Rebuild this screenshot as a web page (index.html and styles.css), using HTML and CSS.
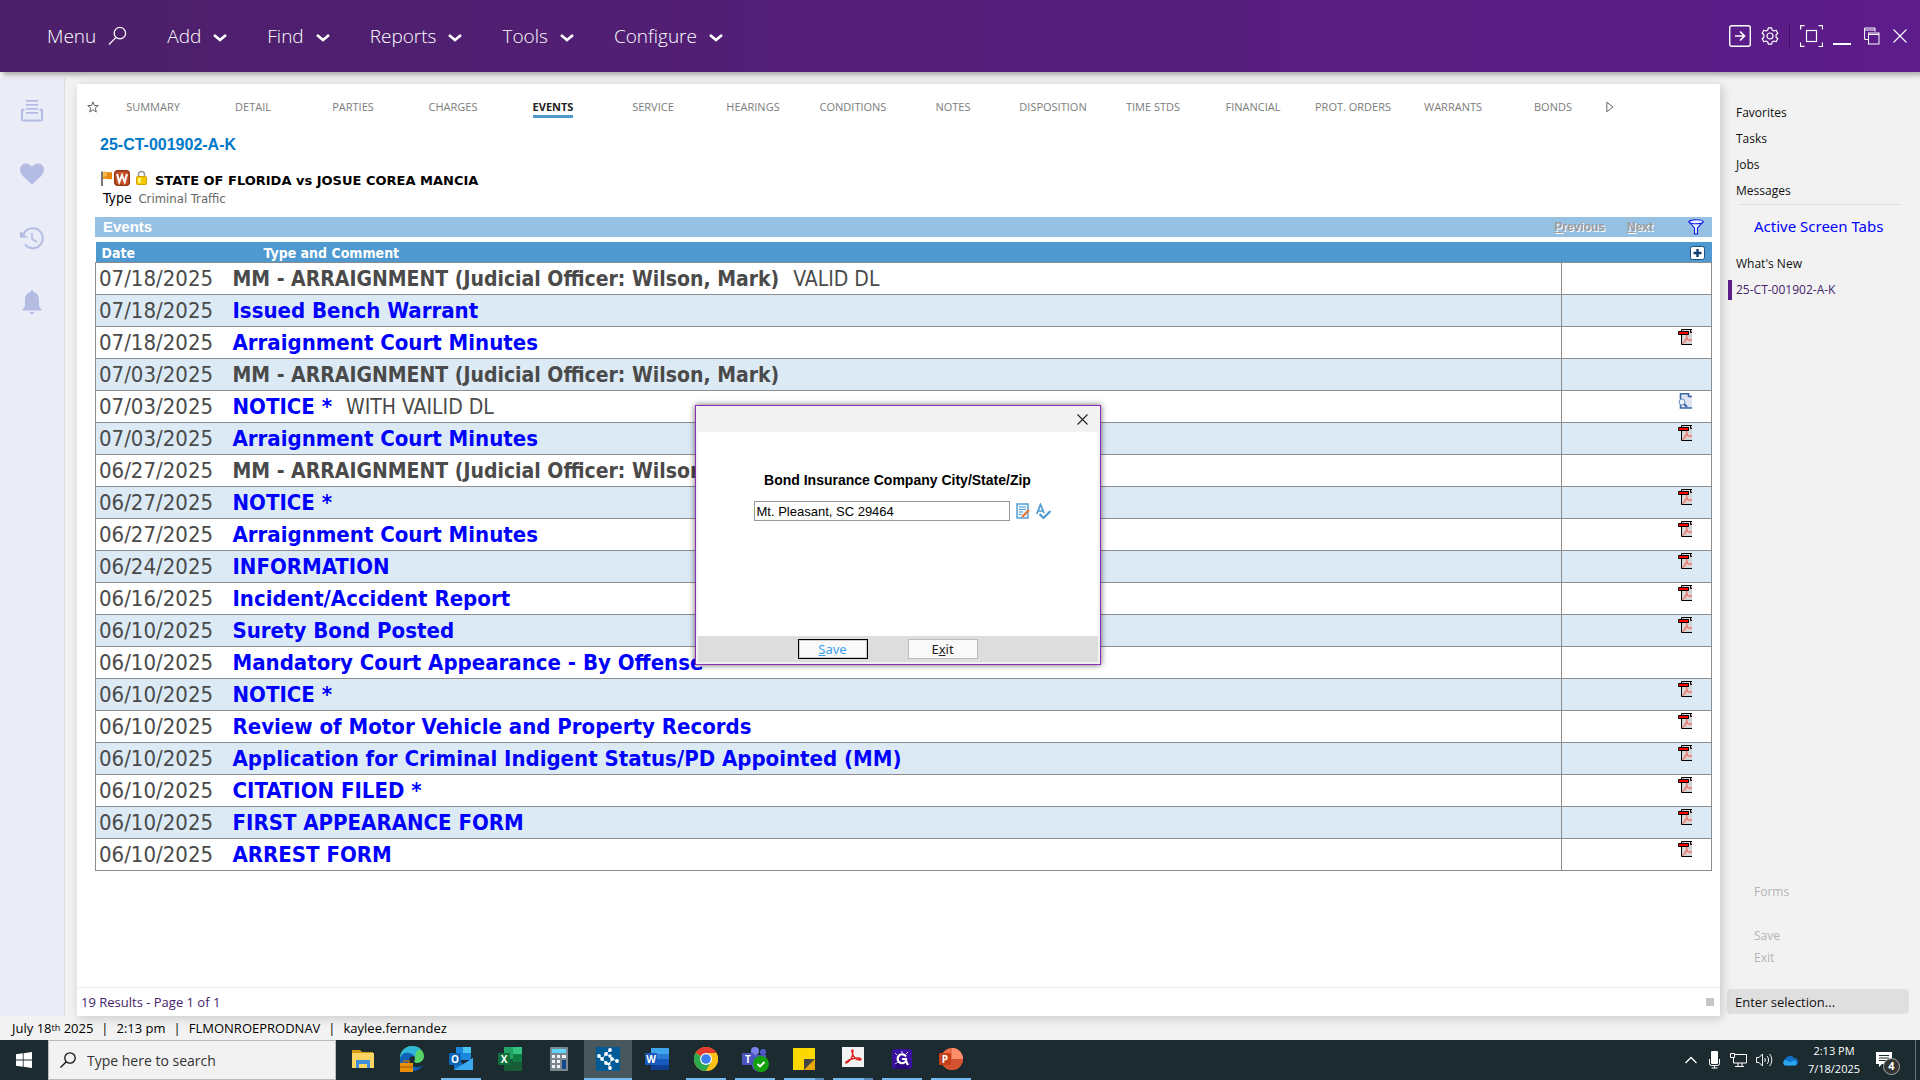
FILE: index.html
```html
<!DOCTYPE html>
<html lang="en">
<head>
<meta charset="utf-8">
<title>25-CT-001902-A-K - Events</title>
<link rel="stylesheet" href="styles.css">
</head>
<body>
<svg class="defs" aria-hidden="true">
  <symbol id="chev" viewBox="0 0 14 10"><path d="M1 2l6 5 6-5" fill="none" stroke="#fff" stroke-width="2.6"/></symbol>
  <symbol id="pdf" viewBox="0 0 14 16"><path d="M3.5.5H14V15.500H3.500z" fill="#d4d4d4"/><path d="M14 .5H3.500V15.500H14" fill="none" stroke="#000"/><path d="M4.500 14.500c3-2 4.500-5 4.500-9M8.500 9c1 2 2.500 2.500 5.500 2" fill="none" stroke="#f76a5e" stroke-width="1.300"/><path d="M12.500.5v3H14" fill="#e00" stroke="#000"/><path d="M.5 2.500h10v3H.5z" fill="#f00" stroke="#000"/></symbol>
  <symbol id="docview" viewBox="0 0 14 16"><path d="M2.500.8h8.500l3 3V15H2.500z" fill="#dfe5f3"/><path d="M2.500 6V.8H10.500V3.500H14M2.500 12v3H14" fill="none" stroke="#3a66a4" stroke-width="1.600"/><circle cx="4" cy="9" r="3" fill="#e6f1f8" stroke="#6d93bd"/><path d="M6 11l3 3" stroke="#3a66a4" stroke-width="2"/></symbol>
</svg>

<header class="topbar">
  <nav class="menu">
    <button class="menu-item">Menu
      <svg width="19" height="20" viewBox="0 0 20 20" fill="none" stroke="#fff" stroke-width="1.300"><circle cx="12.500" cy="7" r="6"/><path d="M8.500 11.500L1 19"/></svg></button>
    <button class="menu-item">Add <svg class="chev" width="14" height="10"><use href="#chev"/></svg></button>
    <button class="menu-item">Find <svg class="chev" width="14" height="10"><use href="#chev"/></svg></button>
    <button class="menu-item">Reports <svg class="chev" width="14" height="10"><use href="#chev"/></svg></button>
    <button class="menu-item">Tools <svg class="chev" width="14" height="10"><use href="#chev"/></svg></button>
    <button class="menu-item">Configure <svg class="chev" width="14" height="10"><use href="#chev"/></svg></button>
  </nav>
  <div class="window-tools">
    <button class="tool" aria-label="Sign out"><svg width="22" height="22" viewBox="0 0 22 22" fill="none" stroke="#fff" stroke-width="1.400"><rect x=".7" y=".7" width="20.600" height="20.600" rx="2"/><path d="M6 11h9M11 6.500l4.500 4.500-4.500 4.500" stroke-width="1.700"/></svg></button>
    <button class="tool" aria-label="Settings"><svg width="18" height="18" viewBox="0 0 18 18" fill="none" stroke="#fff" stroke-width="1.200"><circle cx="9" cy="9" r="3"/><path d="M7.300.8h3.400l.5 2.300 1.600.9 2.300-.8 1.700 3-1.700 1.600v2.400l1.700 1.600-1.700 3-2.300-.8-1.600.9-.5 2.300H7.300l-.5-2.300-1.600-.9-2.300.8-1.700-3 1.700-1.600V7.800L1.200 6.200l1.700-3 2.300.8 1.600-.9z" stroke-linejoin="round"/></svg></button>
    <span class="tool-divider"></span>
    <button class="tool" aria-label="Full screen"><svg width="23" height="22" viewBox="0 0 23 22" fill="none" stroke="#fff" stroke-width="1.200"><rect x="6.500" y="5.500" width="10" height="11"/><path d="M.6 4.500V.6h4M18.500.6h4v4M22.400 17.500v4h-4M4.500 21.400h-4v-4"/></svg></button>
    <button class="tool minimize" aria-label="Minimize"><svg width="18" height="22" viewBox="0 0 18 22"><path d="M0 19h18" stroke="#fff" stroke-width="2"/></svg></button>
    <button class="tool" aria-label="Restore"><svg width="16" height="18" viewBox="0 0 16 18" fill="none" stroke="#fff"><path d="M4 12.500H.6V1H11v3.500M.6 3H11"/><rect x="4.500" y="6" width="10.500" height="11"/><path d="M4.500 7.500H15"/></svg></button>
    <button class="tool" aria-label="Close"><svg width="14" height="14" viewBox="0 0 14 14"><path d="M.5.500l13 13M13.500.5l-13 13" stroke="#fff" stroke-width="1.100"/></svg></button>
  </div>
</header>

<div class="workspace">
  <aside class="rail">
    <a href="#" aria-label="Queue"><svg width="24" height="24" viewBox="0 0 24 24" fill="#b5bce4"><path d="M6 2h12v1.800H6zM6 6h12v1.800H6zM6 10h12v1.800H6zM6 14h12v1.800H6z"/><path d="M4.500 12H2v9a1.500 1.500 0 001.500 1.500h17A1.500 1.500 0 0022 21v-9h-2.500" fill="none" stroke="#b5bce4" stroke-width="2"/></svg></a>
    <a href="#" aria-label="Favorites"><svg width="24" height="24" viewBox="0 0 24 24" fill="#b5bce4"><path d="M12 22.500C5 16 0 12.500 0 7.500 0 4 2.700 1.500 6 1.500c2.500 0 4.700 1.300 6 3.300 1.300-2 3.500-3.300 6-3.300 3.300 0 6 2.500 6 6 0 5-5 8.500-12 15z"/></svg></a>
    <a href="#" aria-label="History"><svg width="24" height="24" viewBox="0 0 24 24" fill="none" stroke="#b5bce4" stroke-width="2"><path d="M3 10a10 10 0 112 8.500"/><path d="M12 7v6l5 3" stroke-width="1.600"/><path d="M0 5v6.500h8z" fill="#b5bce4" stroke="none"/></svg></a>
    <a href="#" aria-label="Notifications"><svg width="24" height="24" viewBox="0 0 24 24" fill="#b5bce4"><path d="M12 0c1 0 1.500 1 1.500 2 4 1 5.500 4 5.500 8v6l3 4.500H2L5 16v-6c0-4 1.500-7 5.500-8 0-1 .5-2 1.500-2zM9.500 22h5c-.5 1.500-1.500 2-2.500 2s-2-.5-2.500-2z"/></svg></a>
  </aside>

  <main class="panel">
    <nav class="tabs">
      <a class="tab-icon" href="#" aria-label="Favorite"><svg width="12" height="12" viewBox="0 0 12 12"><path d="M6 .8l1.400 3.700 3.900.1-3.100 2.500 1.200 3.900L6 8.800 2.600 11l1.200-3.900L.7 4.600l3.900-.1z" fill="none" stroke="#666"/></svg></a>
      <a class="tab" href="#">SUMMARY</a><a class="tab" href="#">DETAIL</a><a class="tab" href="#">PARTIES</a><a class="tab" href="#">CHARGES</a><a class="tab tab-on" href="#"><span>EVENTS</span></a><a class="tab" href="#">SERVICE</a><a class="tab" href="#">HEARINGS</a><a class="tab" href="#">CONDITIONS</a><a class="tab" href="#">NOTES</a><a class="tab" href="#">DISPOSITION</a><a class="tab" href="#">TIME STDS</a><a class="tab" href="#">FINANCIAL</a><a class="tab" href="#">PROT. ORDERS</a><a class="tab" href="#">WARRANTS</a><a class="tab" href="#">BONDS</a>
      <a class="tab-next" href="#" aria-label="More tabs"><svg width="8" height="12" viewBox="0 0 8 12"><path d="M.8 1.200v9.600L7 6z" fill="none" stroke="#666"/></svg></a>
    </nav>

    <h1 class="case-number">25-CT-001902-A-K</h1>
    <div class="case-title">
      <svg width="12" height="16" viewBox="0 0 12 16"><path d="M1 1.500h2V16H1z" fill="#777"/><path d="M3 2c3-1 5 1 9 0v7c-4 1-6-1-9 0z" fill="#e8890c"/><path d="M3 2c2-.6 3 0 4 .2v4L3 7z" fill="#f8b64a"/></svg>
      <svg width="16" height="16" viewBox="0 0 16 16"><rect x=".7" y=".7" width="14.600" height="14.600" rx="3" fill="#c4532a" stroke="#96330f" stroke-width="1.400"/><path d="M3 4l2.300 8L8 5l2.700 7L13 4" fill="none" stroke="#fff" stroke-width="2"/></svg>
      <svg class="lock" width="11" height="16" viewBox="0 0 11 16"><path d="M2.500 7V4.500a3 3 0 016 0V7" fill="none" stroke="#999" stroke-width="1.500"/><rect x=".5" y="6.500" width="10" height="8" rx="1" fill="#f6c800" stroke="#d0a000"/><path d="M2 8h3v5H2z" fill="#fff27a"/></svg>
      <h2 class="case-name">STATE OF FLORIDA vs JOSUE COREA MANCIA</h2>
    </div>
    <p class="case-type"><b>Type</b> Criminal Traffic</p>

    <section class="events">
      <div class="events-bar">
        <h3>Events</h3>
        <a class="page-link" href="#"><u>P</u>revious</a>
        <a class="page-link" href="#"><u>N</u>ext</a>
        <a class="filter" href="#" aria-label="Filter"><svg width="16" height="16" viewBox="0 0 16 16"><path d="M1 3l5.500 6v6h3V9L15 3z" fill="#e8f4ff" stroke="#1414f0" stroke-width="1.100"/><ellipse cx="8" cy="2.800" rx="7" ry="2" fill="#e8f4ff" stroke="#1414f0" stroke-width="1.100"/></svg></a>
      </div>
      <table class="grid">
        <thead>
          <tr><th class="c-date">Date</th><th class="c-type">Type and Comment</th><th class="c-doc"><svg width="15" height="14" viewBox="0 0 15 14"><rect x=".5" y=".5" width="14" height="13" rx="2" fill="#fff" stroke="#1a4f80"/><path d="M7.500 3v8M3.500 7h8" stroke="#0f3f70" stroke-width="2.400"/></svg></th></tr>
        </thead>
        <tbody>
          <tr><td>07/18/2025</td><td><b>MM - ARRAIGNMENT (Judicial Officer: Wilson, Mark)</b><span>VALID DL</span></td><td></td></tr>
          <tr><td>07/18/2025</td><td><a href="#">Issued Bench Warrant</a></td><td></td></tr>
          <tr><td>07/18/2025</td><td><a href="#">Arraignment Court Minutes</a></td><td><svg width="14" height="16"><use href="#pdf"/></svg></td></tr>
          <tr><td>07/03/2025</td><td><b>MM - ARRAIGNMENT (Judicial Officer: Wilson, Mark)</b></td><td></td></tr>
          <tr><td>07/03/2025</td><td><a href="#">NOTICE *</a><span>WITH VAILID DL</span></td><td><svg width="14" height="16"><use href="#docview"/></svg></td></tr>
          <tr><td>07/03/2025</td><td><a href="#">Arraignment Court Minutes</a></td><td><svg width="14" height="16"><use href="#pdf"/></svg></td></tr>
          <tr><td>06/27/2025</td><td><b>MM - ARRAIGNMENT (Judicial Officer: Wilson, Mark)</b></td><td></td></tr>
          <tr><td>06/27/2025</td><td><a href="#">NOTICE *</a></td><td><svg width="14" height="16"><use href="#pdf"/></svg></td></tr>
          <tr><td>06/27/2025</td><td><a href="#">Arraignment Court Minutes</a></td><td><svg width="14" height="16"><use href="#pdf"/></svg></td></tr>
          <tr><td>06/24/2025</td><td><a href="#">INFORMATION</a></td><td><svg width="14" height="16"><use href="#pdf"/></svg></td></tr>
          <tr><td>06/16/2025</td><td><a href="#">Incident/Accident Report</a></td><td><svg width="14" height="16"><use href="#pdf"/></svg></td></tr>
          <tr><td>06/10/2025</td><td><a href="#">Surety Bond Posted</a></td><td><svg width="14" height="16"><use href="#pdf"/></svg></td></tr>
          <tr><td>06/10/2025</td><td><a href="#">Mandatory Court Appearance - By Offense</a></td><td></td></tr>
          <tr><td>06/10/2025</td><td><a href="#">NOTICE *</a></td><td><svg width="14" height="16"><use href="#pdf"/></svg></td></tr>
          <tr><td>06/10/2025</td><td><a href="#">Review of Motor Vehicle and Property Records</a></td><td><svg width="14" height="16"><use href="#pdf"/></svg></td></tr>
          <tr><td>06/10/2025</td><td><a href="#">Application for Criminal Indigent Status/PD Appointed (MM)</a></td><td><svg width="14" height="16"><use href="#pdf"/></svg></td></tr>
          <tr><td>06/10/2025</td><td><a href="#">CITATION FILED *</a></td><td><svg width="14" height="16"><use href="#pdf"/></svg></td></tr>
          <tr><td>06/10/2025</td><td><a href="#">FIRST APPEARANCE FORM</a></td><td><svg width="14" height="16"><use href="#pdf"/></svg></td></tr>
          <tr><td>06/10/2025</td><td><a href="#">ARREST FORM</a></td><td><svg width="14" height="16"><use href="#pdf"/></svg></td></tr>
        </tbody>
      </table>
    </section>

    <footer class="results"><span>19 Results - Page 1 of 1</span><i></i></footer>

    <form class="dialog" role="dialog">
      <div class="dialog-head"><button type="button" class="dialog-close" aria-label="Close"><svg width="11" height="11" viewBox="0 0 11 11"><path d="M.5.500l10 10M10.500.5l-10 10" stroke="#222" stroke-width="1.100"/></svg></button></div>
      <div class="dialog-body">
        <label for="csz">Bond Insurance Company City/State/Zip</label>
        <div class="field">
          <input id="csz" type="text" value="Mt. Pleasant, SC 29464">
          <svg width="14" height="16" viewBox="0 0 14 16"><rect x="1" y="1" width="11" height="14" fill="#e9f4fc" stroke="#4c9bd2" stroke-width="1.400"/><path d="M3 4h7M3 6.500h7M3 9h4M3 11.500h2.500" stroke="#4c9bd2"/><path d="M6 14l7-7" stroke="#e8742c" stroke-width="2.200"/></svg>
          <svg width="15" height="16" viewBox="0 0 15 16" fill="none" stroke="#4c9bd2"><path d="M.8 11L4.500 1.500 8 10M2 8h5" stroke-width="1.700"/><path d="M3.500 11l4 4 7-7" stroke-width="2.200"/></svg>
        </div>
      </div>
      <div class="dialog-foot">
        <button type="button" class="btn btn-main"><u>S</u>ave</button>
        <button type="button" class="btn">E<u>x</u>it</button>
      </div>
    </form>
  </main>

  <aside class="side">
    <nav class="side-links">
      <a href="#">Favorites</a><a href="#">Tasks</a><a href="#">Jobs</a><a href="#">Messages</a>
    </nav>
    <h2 class="side-title">Active Screen Tabs</h2>
    <nav class="side-links">
      <a href="#">What's New</a><a class="current" href="#">25-CT-001902-A-K</a>
    </nav>
    <div class="side-actions">
      <button disabled class="forms">Forms</button><button disabled>Save</button><button disabled>Exit</button>
    </div>
    <input class="selection" type="text" value="Enter selection..." aria-label="Selection">
  </aside>
</div>

<footer class="status"><span>July 18<small>th</small> 2025</span><i>|</i><span>2:13 pm</span><i>|</i><span>FLMONROEPRODNAV</span><i>|</i><span>kaylee.fernandez</span></footer>

<div class="taskbar">
  <button class="start" aria-label="Start"><svg width="16" height="16" viewBox="0 0 16 16" fill="#fff"><path d="M0 2.300L6.800 1.300V7.600H0zM7.600 1.200L16 0v7.600H7.600zM0 8.400h6.800v6.300L0 13.700zM7.600 8.400H16V16l-8.400-1.200z"/></svg></button>
  <label class="search"><svg width="16" height="16" viewBox="0 0 16 16" fill="none" stroke="#111" stroke-width="1.300"><circle cx="10" cy="6" r="5.200"/><path d="M6.300 9.700L.5 15.500"/></svg><input type="text" placeholder="Type here to search" aria-label="Search"></label>
  <div class="apps">
    <button class="app" aria-label="File Explorer"><svg width="24" height="24" viewBox="0 0 24 24"><path d="M1 3h8l2 2h11v3H1z" fill="#d89a10"/><path d="M1 6h22v15H1z" fill="#fcd462"/><path d="M5 21v-8h14v8h-3v-4H8v4z" fill="#3f8fdc"/></svg></button>
    <button class="app" aria-label="Edge"><svg width="26" height="28" viewBox="0 0 26 28"><path d="M1 13A12 12 0 0113 1c7 0 12 5 12 10 0 4-3 7-7 7-3 0-3-2-2-4 1-5-8-8-15-1z" fill="#56d465"/><path d="M1 13A12 12 0 0113 1c4 0 7 1 9 4-4-1-5 0-6 9 1-5-8-8-15-1z" fill="#2fb6d8"/><path d="M1 13c2-6 10-7 14-2-4 0-6 3-4 7s8 6 13 2c-3 6-12 8-18 4-4-3-6-7-5-11z" fill="#1160b8"/><rect x="1" y="18" width="13" height="9" fill="#e8900c"/><path d="M5 18v-2h5v2" fill="none" stroke="#b86a08" stroke-width="1.500"/><path d="M1 22h13" stroke="#9a5808"/></svg></button>
    <button class="app run" aria-label="Outlook"><svg width="26" height="26" viewBox="0 0 26 26"><path d="M8 1h15v13H8z" fill="#1a86dc"/><path d="M15 1h8v6h-8z" fill="#4cc4f4"/><path d="M6 12l9.500 6 9.500-6v12H6z" fill="#1272c8"/><path d="M6 24l19-12v12z" fill="#3ba9ee"/><rect x="1" y="7" width="12" height="12" rx="1" fill="#0a64b8"/><text x="7" y="17" class="glyph">O</text></svg></button>
    <button class="app" aria-label="Excel"><svg width="26" height="26" viewBox="0 0 26 26"><path d="M7 1h18v24H7z" fill="#21a366"/><path d="M16 1h9v7h-9z" fill="#33c481"/><path d="M7 13h18v12H7z" fill="#185c37"/><path d="M16 8h9v8h-9z" fill="#107c41"/><rect x="1" y="7" width="12" height="12" rx="1" fill="#0f703b"/><text x="7" y="17" class="glyph">X</text></svg></button>
    <button class="app" aria-label="Calculator"><svg width="20" height="24" viewBox="0 0 20 24"><rect x="1" y="0" width="18" height="24" rx="1" fill="#7c8790"/><path d="M3 2h14v4H3z" fill="#5fd4f8"/><path d="M3 8h3v3H3zM8 8h3v3H8zM13 8h4v3h-4zM3 13h3v3H3zM8 13h3v3H8zM3 18h3v3H3zM8 18h3v3H8z" fill="#f0f3f5"/><path d="M13 13h4v9h-4z" fill="#12498c"/></svg></button>
    <button class="app run active" aria-label="Odyssey Navigator"><svg width="24" height="24" viewBox="0 0 24 24"><path d="M0 0h24v24H0z" fill="#005b96"/><g stroke="#cfe6f5" fill="none"><path d="M6 12l4-5 4 2 2 3-3 5-3-1zM10 7l4-4M16 12l5 2M10 16l4 4M6 12L3 9"/></g><g fill="#fff"><circle cx="10" cy="7" r="1.900"/><circle cx="14" cy="3" r="1.900"/><circle cx="6" cy="12" r="1.900"/><circle cx="3" cy="9" r="1.900"/><circle cx="14" cy="9" r="1.700"/><circle cx="16" cy="12" r="1.900"/><circle cx="21" cy="14" r="1.900"/><circle cx="10" cy="16" r="1.900"/><circle cx="13" cy="17" r="1.500"/><circle cx="14" cy="21" r="1.900"/></g></svg></button>
    <button class="app" aria-label="Word"><svg width="26" height="26" viewBox="0 0 26 26"><path d="M7 2h18v22H7z" fill="#2b7cd3"/><path d="M7 2h18v6H7z" fill="#41a5ee"/><path d="M7 13h18v6H7z" fill="#185abd"/><path d="M7 19h18v5H7z" fill="#103f91"/><rect x="1" y="7" width="12" height="12" rx="1" fill="#185abd"/><text x="7" y="17" class="glyph">W</text></svg></button>
    <button class="app run" aria-label="Chrome"><svg width="24" height="24" viewBox="0 0 24 24"><circle cx="12" cy="12" r="12" fill="#fbc116"/><path d="M12 12L1.600 6a12 12 0 0120.800 0z" fill="#e33b2e"/><path d="M1.600 6A12 12 0 0012 24l5.200-9z" fill="#2da94f"/><path d="M12 6h10.400A12 12 0 0112 24l5-9z" fill="#fbc116"/><circle cx="12" cy="12" r="6" fill="#fff"/><circle cx="12" cy="12" r="4.800" fill="#3b7ded"/></svg></button>
    <button class="app run" aria-label="Teams"><svg width="28" height="26" viewBox="0 0 28 26"><circle cx="14" cy="5" r="4" fill="#7b83eb"/><circle cx="22" cy="6" r="3" fill="#5059c9"/><path d="M9 9h16v8a7 7 0 01-14 3z" fill="#5059c9"/><rect x="1" y="7" width="12" height="12" rx="1" fill="#4b53bc"/><text x="7" y="17" class="glyph">T</text><circle cx="20" cy="18" r="8" fill="#13a10e"/><path d="M16.500 18l2.500 2.500 4.500-4.500" fill="none" stroke="#fff" stroke-width="1.800"/></svg></button>
    <button class="app run pair" aria-label="Sticky Notes"><svg width="22" height="22" viewBox="0 0 22 22"><path d="M0 0h22v11L11 22H0z" fill="#fdd800"/><path d="M11 22V11h11z" fill="#444"/><path d="M11 22L22 11v11z" fill="#e8a80a"/></svg></button>
    <button class="app run pair" aria-label="Acrobat"><svg class="lift" width="22" height="20" viewBox="0 0 22 20"><path d="M0 0h22v20H0z" fill="#f2f2f2"/><path d="M4 16c4-1 7-6 7-12 0-2-2-1-1 1 1 4 3 8 8 8 2 0 1-2-2-2-4 0-8 1-12 4-1 1 0 1 0 1z" fill="none" stroke="#e02020" stroke-width="1.300"/></svg></button>
    <button class="app run" aria-label="Snagit"><svg width="20" height="20" viewBox="0 0 20 20"><rect width="20" height="20" rx="3" fill="#3a10a0"/><path d="M3 12h14v8H3z" fill="#28087c"/><path d="M14 7.500A4.500 4.500 0 1014 12v-2h-4M14 12l2 4" fill="none" stroke="#fff" stroke-width="2.200"/><path d="M3 4l2 2M16 3l-2 2M3 15l3-2M10 2v2" stroke="#d8c8ff"/></svg></button>
    <button class="app run" aria-label="PowerPoint"><svg width="26" height="26" viewBox="0 0 26 26"><circle cx="14" cy="13" r="11" fill="#ed6c47"/><path d="M14 2a11 11 0 0111 11H14z" fill="#ff8f6b"/><path d="M3 13h22a11 11 0 01-22 0z" fill="#d35230"/><rect x="1" y="7" width="12" height="12" rx="1" fill="#c43e1c"/><text x="7" y="17" class="glyph">P</text></svg></button>
  </div>
  <div class="tray">
    <svg width="12" height="8" viewBox="0 0 12 8"><path d="M.5 7L6 1.500 11.500 7" fill="none" stroke="#fff" stroke-width="1.300"/></svg>
    <svg width="11" height="18" viewBox="0 0 11 18"><rect x="2" y="0" width="7" height="13" rx="1" fill="#fff"/><path d="M.5 8v4.500a2 2 0 002 2h6a2 2 0 002-2V8M5.500 14.500V17M2.500 17h6" fill="none" stroke="#fff"/></svg>
    <svg width="17" height="14" viewBox="0 0 17 14" fill="none" stroke="#fff"><path d="M5 1.500h11.500v8.500H3.500V5M8 10v3M12 10v3M5 13.500h9"/><path d="M.5.500h4v4h-4z"/></svg>
    <svg width="17" height="14" viewBox="0 0 17 14" fill="none" stroke="#fff"><path d="M.5 4.500h2.500L6.500 1v12L3 9.500H.5z"/><path d="M8.500 5c1 1 1 3 0 4M11 3c2 2 2 6 0 8M13.500 1c3 3 3 9 0 12"/></svg>
    <svg width="16" height="11" viewBox="0 0 16 11"><path d="M4 10.500a4 4 0 01-.5-7A5 5 0 0112 3a4 4 0 012 7.500z" fill="#1070c8"/><path d="M3 10.500A3 3 0 013 5l5 2 5-1.500a3 3 0 010 5z" fill="#2aa6f0"/></svg>
    <div class="clock"><span>2:13 PM</span><span>7/18/2025</span></div>
    <div class="notice"><svg width="16" height="16" viewBox="0 0 16 16"><path d="M0 0h16v12H6l-3 3v-3H0z" fill="#fff"/><path d="M3 3.500h10M3 6h10M3 8.500h10" stroke="#1c2d31"/></svg><b>4</b></div>
  </div>
</div>
</body>
</html>
```
FILE: styles.css
```css
* { box-sizing: border-box; }
body {
  margin: 0;
  min-height: 100vh;
  display: flex;
  flex-direction: column;
  background: #f2f2f2;
  color: #111;
  font: 12px/16px "Open Sans", "Noto Sans", sans-serif;
}
h1, h2, h3, p { margin: 0; font-weight: normal; }
a { color: inherit; text-decoration: none; }
i { font-style: normal; }
button { margin: 0; padding: 0; border: 0; background: none; color: inherit; font: inherit; }
svg { display: block; flex: none; }
.defs { position: absolute; width: 0; height: 0; }

/* Top bar */
.topbar {
  position: relative;
  height: 72px;
  display: flex;
  justify-content: space-between;
  align-items: center;
  padding: 0 13px 0 47px;
  background: linear-gradient(90deg, #4c2069, #5c1c8a);
  box-shadow: 3px 3px 5px rgba(0, 0, 0, .3);
  color: #fff;
}
.menu { display: flex; gap: 40px; }
.menu-item { display: flex; align-items: center; gap: 12px; font-size: 19px; line-height: 28px; font-weight: 300; }
.chev { margin-top: 3px; }
.window-tools { display: flex; align-items: center; gap: 10px; }
.tool-divider { width: 1px; height: 24px; background: #3d0f66; }
.minimize { margin-right: 3px; }
.tool:last-child { margin-left: 3px; }

/* Workspace */
.workspace { flex: 1; display: flex; }
.rail {
  width: 65px;
  margin-top: 6px;
  padding-top: 20px;
  display: flex;
  flex-direction: column;
  align-items: center;
  gap: 40px;
  background: #eaedf8;
  border-right: 1px solid #dcdcdc;
}
.panel {
  position: relative;
  flex: 1;
  min-width: 0;
  margin: 12px 0 0 12px;
  display: flex;
  flex-direction: column;
  background: #fff;
  box-shadow: 2px 2px 10px rgba(0, 0, 0, .18);
}

/* Tabs */
.tabs { display: flex; align-items: center; height: 46px; padding-left: 10px; color: #7c7c7c; font-size: 11px; }
.tab-icon { width: 16px; }
.tab { flex: 0 1 100px; text-align: center; white-space: nowrap; }
.tab-on { color: #222; font-weight: 700; }
.tab-on span { display: inline-block; line-height: 16px; margin-top: 2px; border-bottom: 3px solid #4d98cf; }
.tab-next { margin-left: 3px; }

/* Case heading */
.case-number { padding: 5px 23px 0; font: bold 16px/20px "Liberation Sans", Arial, sans-serif; color: #0078c8; }
.case-title { display: flex; gap: 2px; padding: 15px 23px 0; height: 35px; }
.lock { margin-left: 4px; }
.case-name { margin-left: 6px; padding-top: 3px; font: bold 13px/16px "DejaVu Sans", sans-serif; color: #000; }
.case-type { padding-left: 26px; font: 13px/16px "DejaVu Sans Condensed", "DejaVu Sans", sans-serif; color: #666; }
.case-type b { margin-right: 3px; font-size: 14px; font-weight: normal; color: #000; }

/* Events table */
.events { margin: 10px 8px 0 18px; }
.events-bar {
  display: flex;
  align-items: center;
  height: 20px;
  margin-bottom: 5px;
  padding: 0 8px;
  background: #96c1e3;
  color: #fff;
  font-family: "Liberation Sans", Arial, sans-serif;
}
.events-bar h3 { flex: 1; font-size: 15px; font-weight: bold; }
.page-link { margin-right: 22px; font-size: 12px; line-height: 18px; font-weight: bold; color: #9b9b9b; text-shadow: 1px 1px #fff; }
.filter { margin-left: 13px; }
.grid {
  width: 100%;
  table-layout: fixed;
  border-collapse: collapse;
  font: 22px/30px "DejaVu Sans Condensed", "DejaVu Sans", sans-serif;
  color: #4a4a4a;
}
.grid th { height: 20px; padding: 2px 3px 0 6px; background: #4e99cf; color: #fff; font-size: 14px; line-height: 18px; text-align: left; }
.c-date { width: 132px; }
.grid .c-type { padding-left: 36px; }
.c-doc { width: 150px; }
.c-doc svg { margin-left: auto; margin-right: 4px; }
.grid td { height: 32px; padding: 0 4px; border: 1px solid #8c8c8c; white-space: nowrap; }
.grid td:first-child { padding: 0 3px; border-right: 0; }
.grid td:nth-child(2) { border-left: 0; padding-left: 5px; }
.grid td:last-child { padding: 2px 19px 0 0; vertical-align: top; }
.grid td svg { margin-left: auto; }
.grid tbody tr:nth-child(even) { background: #dceaf6; }
.grid a { font-weight: bold; color: #00f; }
.grid b { font-size: 21px; line-height: 24px; }
.grid td span { margin-left: 14px; font-size: 21px; line-height: 24px; }

.results {
  display: flex;
  justify-content: space-between;
  align-items: center;
  height: 29px;
  margin-top: auto;
  padding: 0 6px 0 4px;
  border-top: 1px solid #ececec;
  font-size: 13px;
  color: #45226a;
}
.results i { width: 8px; height: 8px; background: #c8c8c8; }

/* Dialog over the table */
.dialog {
  position: absolute;
  top: 321px;
  left: 0;
  right: 2px;
  width: 406px;
  margin: 0 auto;
  padding: 0 2px 2px;
  background: #f2f2f2;
  border: 1px solid #8a2fb8;
  box-shadow: 0 0 6px rgba(0, 0, 0, .6);
}
.dialog-head { display: flex; justify-content: flex-end; align-items: center; height: 26px; padding-right: 10px; }
.dialog-body {
  height: 204px;
  padding-top: 40px;
  display: flex;
  flex-direction: column;
  align-items: center;
  gap: 13px;
  background: #fff;
  font-family: "Liberation Sans", Arial, sans-serif;
}
.dialog-body label { font-size: 14px; font-weight: bold; color: #000; }
.field { display: flex; align-items: center; gap: 6px; padding-left: 9px; }
.field input { width: 256px; height: 20px; padding: 0 2px; border: 1px solid #999; font: 13px "Liberation Sans", Arial, sans-serif; color: #000; }
.dialog-foot { display: flex; justify-content: center; align-items: center; gap: 40px; height: 26px; padding-right: 20px; background: #ddd; }
.btn { width: 70px; height: 20px; background: #f9f9f9; border: 1px solid #bbb; color: #222; font: 13px/18px "Noto Sans", sans-serif; }
.btn-main { border-color: #000; outline: 1px solid #ccc; outline-offset: -2px; color: #3ea3ec; }

/* Right column */
.side { width: 200px; padding: 31px 11px 2px 7px; display: flex; flex-direction: column; }
.side-links { display: flex; flex-direction: column; gap: 6px; margin-left: 1px; }
.side-links a { padding-left: 8px; line-height: 20px; }
.side-links .current { padding-left: 4px; border-left: 4px solid #5c1c8a; color: #45226a; }
.side-title { margin: 3px 9px 18px 13px; padding: 11px 0 0 14px; border-top: 1px solid #ddd; font: 15px/20px "Noto Sans", sans-serif; color: #00f; }
.side-actions { margin-top: auto; padding: 0 0 21px 27px; display: flex; flex-direction: column; align-items: flex-start; gap: 2px; }
.side-actions button { line-height: 20px; color: #b4b4b4; }
.side-actions .forms { margin-bottom: 22px; }
.selection { width: 182px; height: 25px; padding: 0 8px; border: 0; border-radius: 4px; background: #dfdfdf; color: #111; font: 13px "Open Sans", sans-serif; }

.status { display: flex; align-items: center; gap: 8px; height: 24px; padding-left: 12px; font-size: 13px; color: #000; }
.status small { font-size: 9px; vertical-align: 2px; line-height: 1; }

/* Taskbar */
.taskbar { height: 40px; display: flex; background: #1b2b30; color: #fff; }
.start { width: 48px; display: flex; align-items: center; justify-content: center; }
.search { width: 288px; display: flex; align-items: center; gap: 11px; padding-left: 11px; background: #f2f2f2; border: 1px solid #bbb; }
.search input { flex: 1; min-width: 0; padding: 0; border: 0; background: none; font: 14px "Open Sans", sans-serif; }
.search input::placeholder { color: #333; opacity: 1; }
.apps { display: flex; gap: 1px; padding-left: 3px; }
.app { width: 48px; display: flex; align-items: center; justify-content: center; border-bottom: 2px solid transparent; }
.run { background: linear-gradient(#76b9ed, #76b9ed) center bottom / 40px 2px no-repeat border-box; }
.pair { background: linear-gradient(90deg, #76b9ed 31px, #5588b8 31px) center bottom / 40px 2px no-repeat border-box; }
.active { background: linear-gradient(#76b9ed, #76b9ed) bottom / 100% 2px no-repeat border-box, #48575b; }
.lift { margin-bottom: 4px; }
.glyph { font: bold 10px "Open Sans", sans-serif; fill: #fff; text-anchor: middle; }
.tray { display: flex; align-items: center; gap: 9px; margin-left: auto; margin-right: 4px; padding-right: 20px; border-right: 1px solid #66757a; }
.tray svg:nth-child(1) { margin-right: 3px; }
.tray svg:nth-child(2) { margin-right: 1px; }
.clock { width: 54px; display: flex; flex-direction: column; align-items: center; line-height: 18px; font-size: 11px; }
.notice { position: relative; margin-left: 6px; }
.notice b { position: absolute; left: 7px; top: 6px; width: 17px; height: 17px; border: 1px solid #aaa; border-radius: 50%; background: #333; font-size: 11px; line-height: 14px; text-align: center; }
```
